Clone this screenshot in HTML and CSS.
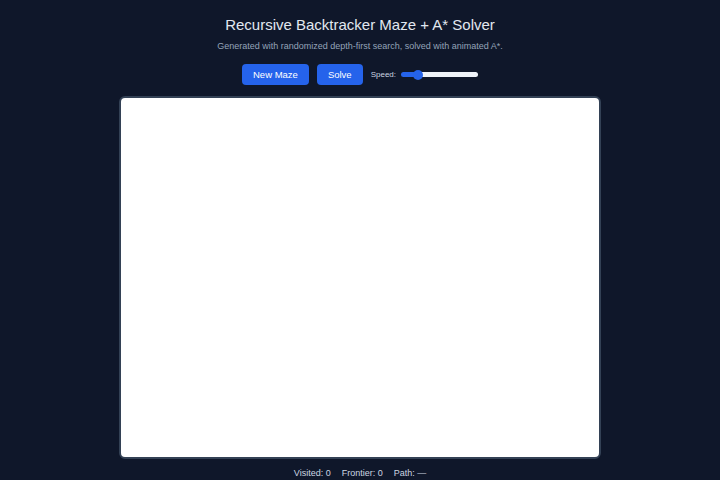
FILE: index.html
```html
<!DOCTYPE html>
<html lang="en">
<head>
<meta charset="utf-8">
<title>Maze</title>
<link rel="stylesheet" href="styles.css">
</head>
<body>
<main class="app">
  <h1 class="title">Recursive Backtracker Maze + A* Solver</h1>
  <p class="subtitle">Generated with randomized depth-first search, solved with animated A*.</p>
  <div class="controls">
    <button class="btn">New Maze</button>
    <button class="btn">Solve</button>
    <label class="speed">Speed: <input class="range" type="range" min="0" max="100" value="18"></label>
  </div>
  <div class="board"></div>
  <div class="stats">
    <span>Visited: 0</span>
    <span>Frontier: 0</span>
    <span>Path: —</span>
  </div>
</main>
</body>
</html>
```
FILE: styles.css
```css
html, body {
  margin: 0;
  height: 100%;
  background: #0f172a;
  font-family: "Liberation Sans", Arial, sans-serif;
  color: #e2e8f0;
}
.app {
  display: flex;
  flex-direction: column;
  align-items: center;
  padding-top: 15px;
}
.title {
  margin: 0;
  font-size: 15px;
  line-height: 20px;
  font-weight: 400;
  color: #e2e8f0;
}
.subtitle {
  margin: 5px 0 0;
  font-size: 9px;
  line-height: 13px;
  color: #94a3b8;
}
.controls {
  margin-top: 11px;
  display: flex;
  align-items: center;
  gap: 8px;
}
.btn {
  height: 21px;
  padding: 0 11px;
  border: 0;
  border-radius: 4px;
  background: #2563eb;
  color: #fff;
  font-family: inherit;
  font-size: 9.5px;
}
.speed {
  display: flex;
  align-items: center;
  gap: 5px;
  font-size: 8px;
  color: #cbd5e1;
}
.range {
  -webkit-appearance: none;
  appearance: none;
  width: 77px;
  height: 5px;
  margin: 0;
  border-radius: 3px;
  background: linear-gradient(to right, #2563eb 0 22%, #eef2f8 22% 100%);
}
.range::-webkit-slider-thumb {
  -webkit-appearance: none;
  appearance: none;
  width: 10px;
  height: 10px;
  border-radius: 50%;
  background: #2563eb;
}
.board {
  margin-top: 11px;
  width: 478px;
  height: 359px;
  background: #fff;
  border: 2px solid #334155;
  border-radius: 6px;
}
.stats {
  margin-top: 7px;
  display: flex;
  gap: 11px;
  font-size: 9px;
  line-height: 14px;
  color: #cbd5e1;
}
```
